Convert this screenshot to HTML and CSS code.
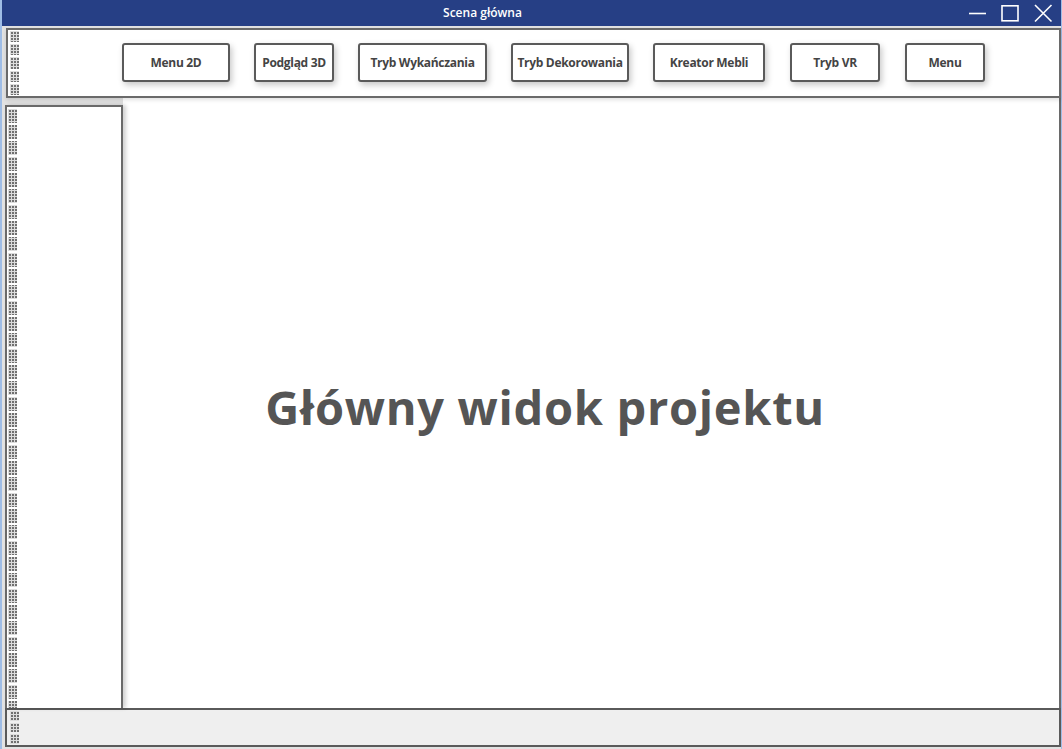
FILE: index.html
```html
<!DOCTYPE html>
<html lang="pl">
<head>
<meta charset="utf-8">
<title>Scena główna</title>
<link rel="stylesheet" href="styles.css">
</head>
<body>
<div class="window">
  <div class="titlebar">
    <span class="title">Scena główna</span>
    <div class="controls">
      <svg class="ctl" width="20" height="20" viewBox="0 0 20 20"><path d="M2 10.5H19" stroke="#fff" stroke-width="1.6" fill="none"/></svg>
      <svg class="ctl" width="20" height="20" viewBox="0 0 20 20"><rect x="2" y="2.8" width="16" height="15" stroke="#fff" stroke-width="1.6" fill="none"/></svg>
      <svg class="ctl" width="20" height="20" viewBox="0 0 20 20"><path d="M2 2L18.5 18.5M18.5 2L2 18.5" stroke="#fff" stroke-width="1.6" fill="none"/></svg>
    </div>
  </div>
  <div class="toolbar">
    <div class="grip grip-h">
      <span></span><span></span><span></span><span></span><span></span>
    </div>
    <div class="buttons">
      <button class="btn btn-menu2d">Menu 2D</button>
      <button class="btn btn-3d">Podgląd 3D</button>
      <button class="btn btn-wyk">Tryb Wykańczania</button>
      <button class="btn btn-dek">Tryb Dekorowania</button>
      <button class="btn btn-meb">Kreator Mebli</button>
      <button class="btn btn-vr">Tryb VR</button>
      <button class="btn btn-menu">Menu</button>
    </div>
  </div>
  <div class="content">
    <aside class="sidepanel">
      <div class="grip-v"></div>
    </aside>
    <main class="mainview">
      <h1 class="heading">Główny widok projektu</h1>
    </main>
  </div>
  <div class="statusbar">
    <div class="grip grip-s">
      <span></span><span></span><span></span>
    </div>
  </div>
</div>
</body>
</html>
```
FILE: styles.css
```css
* { box-sizing: border-box; }
html, body { margin: 0; padding: 0; }
body {
  width: 1062px;
  height: 749px;
  overflow: hidden;
  font-family: "Open Sans", "Noto Sans", sans-serif;
  background: #e4e4e4;
}
.window {
  width: 1062px;
  height: 749px;
  display: flex;
  flex-direction: column;
  border-left: 2px solid #9fbde6;
  border-right: 1px solid #9fbde6;
  background: #e2e2e2;
}
.titlebar {
  height: 26px;
  flex: none;
  background: #263f85;
  position: relative;
  display: flex;
  align-items: center;
  justify-content: center;
}
.title {
  color: #fff;
  font-size: 12px;
  font-weight: 600;
  margin-right: 98px;
  margin-top: -1px;
}
.controls {
  position: absolute;
  right: 8px;
  top: 3px;
  display: flex;
  gap: 13px;
}
.ctl { display: block; }
.toolbar {
  flex: none;
  height: 70px;
  margin: 2px 0 0 4px;
  border: 2px solid #6a6a6a;
  background: #fff;
  display: flex;
  align-items: center;
  box-shadow: 0 2px 4px rgba(0,0,0,0.12);
  position: relative;
  z-index: 1;
}
.grip {
  display: flex;
  flex-direction: column;
  gap: 2px;
}
.grip span,
.grip-v {
  display: block;
  width: 9px;
  background-color: #707070;
  background-image:
    linear-gradient(to right, #dcdcdc 1px, transparent 1px),
    linear-gradient(to bottom, #dcdcdc 1px, transparent 1px);
  background-size: 3px 3px;
}
.grip-h {
  align-self: stretch;
  margin: 1px 0 1px 2px;
}
.grip-h span { flex: 1; }
.buttons {
  display: flex;
  align-items: center;
  gap: 24px;
  margin-left: 103px;
  margin-top: -1px;
}
.btn {
  height: 39px;
  border: 2px solid #5a5a5a;
  border-radius: 3px;
  background: #fff;
  box-shadow: 2px 3px 6px rgba(0,0,0,0.22);
  font-family: "Open Sans", "Noto Sans", sans-serif;
  font-weight: 700;
  font-size: 12px;
  color: #444;
  padding: 0;
  letter-spacing: -0.3px;
}
.btn-menu2d { width: 108px; }
.btn-3d { width: 80px; }
.btn-wyk { width: 129px; }
.btn-dek { width: 118px; }
.btn-meb { width: 112px; }
.btn-vr { width: 90px; margin-left: 1px; }
.btn-menu { width: 80px; margin-left: 1px; }
.content {
  flex: 1;
  display: flex;
  min-height: 0;
}
.sidepanel {
  width: 118px;
  margin: 7px 0 0 3px;
  border: 2px solid #6a6a6a;
  border-bottom: none;
  background: #fff;
  box-shadow: 3px 0 4px rgba(0,0,0,0.18);
  padding: 2px 0 0 1px;
  position: relative;
  z-index: 1;
}
.grip-v {
  height: 100%;
  -webkit-mask-image: repeating-linear-gradient(to bottom, #000 0 14px, transparent 14px 16px);
  mask-image: repeating-linear-gradient(to bottom, #000 0 14px, transparent 14px 16px);
}
.mainview {
  flex: 1;
  background: #fff;
  border-right: 2px solid #6a6a6a;
  display: flex;
  align-items: center;
  justify-content: center;
  padding-right: 92px;
  padding-top: 8px;
}
.heading {
  margin: 0;
  font-family: "Open Sans", "Noto Sans", sans-serif;
  font-weight: 700;
  font-size: 47px;
  color: #555;
  letter-spacing: 0.7px;
}
.statusbar {
  flex: none;
  height: 39px;
  margin: 0 0 2px 3px;
  border: 2px solid #5a5a5a;
  background: #efefef;
  display: flex;
  padding: 1px 0 1px 3px;
}
.grip-s span { flex: 1; }
```
